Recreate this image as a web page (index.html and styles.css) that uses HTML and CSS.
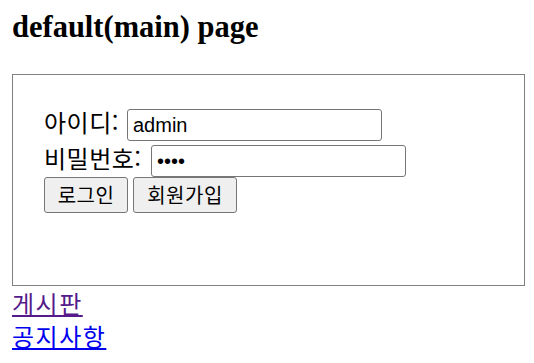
FILE: index.html
```html
<!DOCTYPE html>
<html lang="ko">
<head>
<meta charset="utf-8">
<title>default(main) page</title>
<link rel="stylesheet" href="styles.css">
</head>
<body>
<h1 class="title">default(main) page</h1>
<div class="login-box">
  <form class="login-form">
    <div class="row">
      <label class="label label-id" for="uid">아이디:</label>
      <input class="field" id="uid" type="text" value="admin">
    </div>
    <div class="row row-pw">
      <label class="label label-pw" for="upw">비밀번호:</label>
      <input class="field" id="upw" type="password" value="1234">
    </div>
    <div class="actions">
      <button class="btn btn-login" type="button">로그인</button>
      <button class="btn btn-join" type="button">회원가입</button>
    </div>
  </form>
</div>
<nav class="links">
  <a class="link link-visited" href="#board">게시판</a>
  <a class="link" href="#notice">공지사항</a>
</nav>
</body>
</html>
```
FILE: styles.css
```css
html, body {
  background: #ffffff;
}
body {
  margin: 12px 0 0 12px;
  color: #000000;
  font-family: "Noto Sans CJK KR", "Noto Sans", sans-serif;
}
.title {
  margin: 0 0 32px;
  font-family: "Liberation Serif", "Times New Roman", serif;
  font-weight: bold;
  font-size: 30.5px;
  line-height: 30px;
}
.login-box {
  box-sizing: border-box;
  width: 513px;
  height: 212px;
  border: 1px solid #808080;
  padding: 34px 30px 0 31px;
}
.login-form {
  margin: 0;
}
.row {
  display: flex;
  align-items: baseline;
  height: 32px;
}
.row-pw {
  margin-top: 4px;
}
.label {
  font-size: 24px;
  line-height: 24px;
  letter-spacing: 0.5px;
  white-space: nowrap;
}
.label-id {
  width: 83px;
}
.label-pw {
  width: 107px;
}
.field {
  box-sizing: border-box;
  width: 255px;
  height: 32px;
  margin: 0;
  padding: 0 5px;
  border: 1px solid #767676;
  border-radius: 3px;
  font-family: "Liberation Sans", Arial, sans-serif;
  font-size: 20px;
  color: #000000;
  background: #ffffff;
}
.actions {
  display: flex;
  gap: 5px;
  height: 36px;
}
.btn {
  box-sizing: border-box;
  height: 36px;
  margin: 0;
  padding: 0;
  border: 1px solid #767676;
  border-radius: 3px;
  background: #efefef;
  color: #000000;
  font-family: "Noto Sans CJK KR", sans-serif;
  font-size: 20px;
  line-height: 20px;
  letter-spacing: 0.5px;
}
.btn-login {
  width: 84px;
}
.btn-join {
  width: 104px;
}
.links {
  display: flex;
  flex-direction: column;
  align-items: flex-start;
}
.link {
  font-size: 24px;
  line-height: 33px;
  letter-spacing: 1.5px;
  color: #0000ee;
  text-decoration: underline;
}
.link-visited {
  color: #551a8b;
}
```
